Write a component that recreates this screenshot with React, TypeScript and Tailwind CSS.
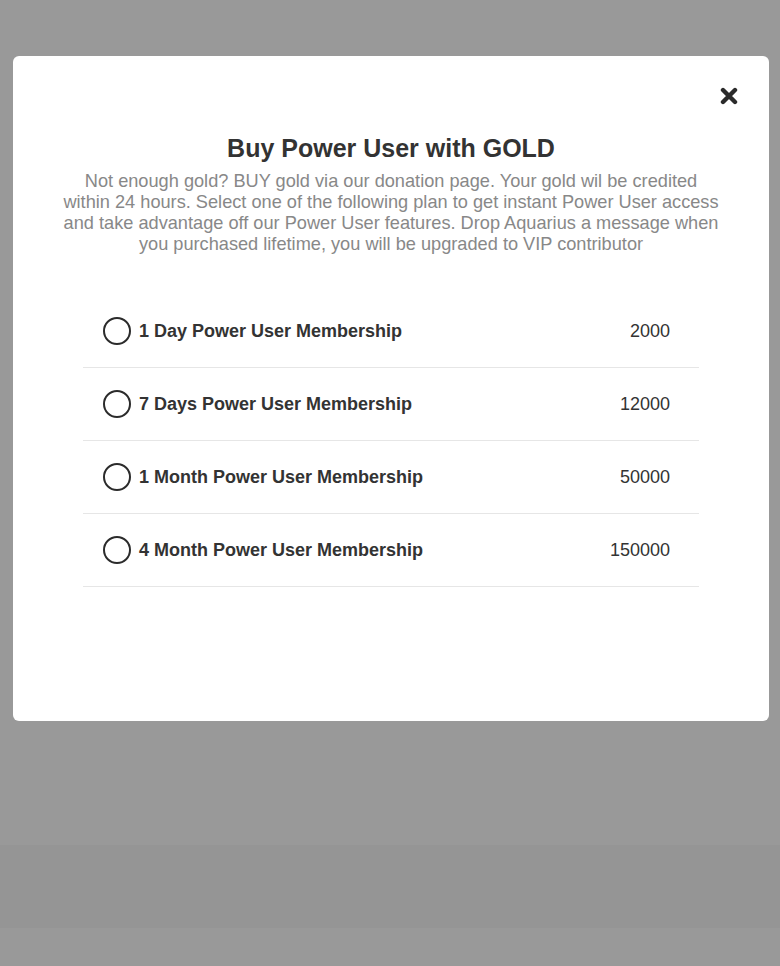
import React from "react";

const plans = [
    { label: "1 Day Power User Membership", price: "2000" },
    { label: "7 Days Power User Membership", price: "12000" },
    { label: "1 Month Power User Membership", price: "50000" },
    { label: "4 Month Power User Membership", price: "150000" },
];

export default function App() {
    return (
        <div className="min-h-[966px] bg-[#999999] flex flex-col" style={{ fontFamily: '"Liberation Sans", Arial, sans-serif' }}>
            <div className="pt-[56px] pl-[13px] pr-[11px] pb-[124px]">
                <div className="relative bg-white rounded-[6px] h-[665px] px-[47px] pt-[76px]">
                    <button className="absolute right-[31px] top-[31px]" aria-label="close">
                        <svg width="18" height="18" viewBox="0 0 18 18" className="block">
                            <path d="M3 3 L15 15 M15 3 L3 15" stroke="#2b2b2b" strokeWidth="4.4" strokeLinecap="round" />
                        </svg>
                    </button>
                    <h2 className="text-center text-[25px] font-bold text-[#333] leading-[32px]">Buy Power User with GOLD</h2>
                    <p className="text-center text-[18.2px] leading-[21px] text-[#888] mt-[7px]">
                        Not enough gold? BUY gold via our donation page. Your gold wil be credited within 24 hours. Select one of the following plan to get instant Power User access and take advantage off our Power User features. Drop Aquarius a message when you purchased lifetime, you will be upgraded to VIP contributor
                    </p>
                    <ul className="mt-[40px] mx-[23px]">
                        {plans.map((p, i) => (
                            <li key={i} className="flex items-center h-[73px] border-b border-[#e6e6e6] pl-[20px] pr-[29px]">
                                <span className="w-[28px] h-[28px] rounded-full border-2 border-[#2b2b2b] shrink-0" />
                                <span className="ml-[8px] text-[18px] font-bold text-[#333]">{p.label}</span>
                                <span className="ml-auto text-[18px] text-[#333]">{p.price}</span>
                            </li>
                        ))}
                    </ul>
                </div>
            </div>
            <div className="h-[83px] bg-[#959595]" />
            <div className="flex-1 bg-[#999999]" />
        </div>
    );
}
